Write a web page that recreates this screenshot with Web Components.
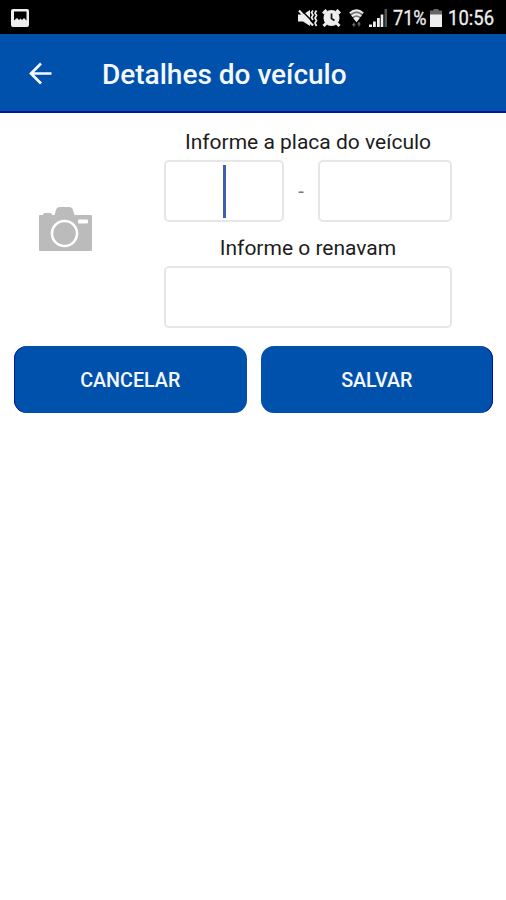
<!DOCTYPE html>
<html lang="pt-BR">
<head>
<meta charset="utf-8">
<meta name="viewport" content="width=device-width, initial-scale=1">
<title>Detalhes do veículo</title>
<style>
  :root {
    --color-primary: #0051ab;
    --color-primary-dark: #00159a;
    --color-caret: #3f60b0;
    --color-border: #e6e6e6;
    --color-icon: #bbb;
  }
  body {
    margin: 0;
    background: #fff;
    color: #1c1c1c;
    font-family: Roboto, sans-serif;
  }
</style>
</head>
<body>
<vehicle-screen></vehicle-screen>

<script>
class StatusBar extends HTMLElement {
  constructor() {
    super()
    this.attachShadow({ mode: 'open' })
    this.shadowRoot.innerHTML = `
      <style>
        :host {
          display: flex;
          align-items: center;
          box-sizing: border-box;
          height: 34px;
          padding: 2px 12px 0 11px;
          background: #000;
          color: #eee;
          font-size: 21px;
          line-height: 32px;
        }
        svg {
          display: block;
          fill: #eee;
          flex: none;
        }
        .picture { margin-right: auto; }
        .mute { margin-right: 4px; }
        .alarm { margin-right: 8px; }
        .wifi { margin-right: 5px; }
        .signal { margin-right: 6px; }
        .battery { margin: 0 6px 0 4px; }
        .percent, .time {
          white-space: nowrap;
          -webkit-text-stroke: .3px #eee;
        }
        .percent { width: 33px; }
        .time { width: 46px; }
        .percent span, .time span {
          display: inline-block;
          transform-origin: 0 50%;
        }
        .percent span { transform: scaleX(.86); }
        .time span { transform: scaleX(.88); }
      </style>
      <svg class="picture" width="18" height="18" viewBox="0 0 18 18">
        <path fill-rule="evenodd" d="M2 0h14a2 2 0 0 1 2 2v14a2 2 0 0 1-2 2H2a2 2 0 0 1-2-2V2a2 2 0 0 1 2-2zM3 2.500v9l3-2.600 2 2.100 1.500-1.500 1.500 1.500 2-2.100 2.500 2.600v-9z"/>
      </svg>
      <svg class="mute" width="20" height="18" viewBox="0 0 20 18">
        <path d="M0 5.500h5l7-4.500v16l-7-4.500H0z"/>
        <path d="M3 1l13 13" stroke="#000" stroke-width="1.600"/>
        <path d="M1 1.500l14 15" fill="none" stroke="#eee" stroke-width="2.200"/>
        <path d="M15 1.500l-1.500 2L15 6l-1.500 2.500L15 11M18.500 1.500L17 4l1.500 2.500L17 9l1.500 2.500L17 14l1.500 3" fill="none" stroke="#eee" stroke-width="1.700"/>
      </svg>
      <svg class="alarm" width="19" height="18" viewBox="0 0 19 18">
        <circle cx="9.500" cy="9" r="8"/>
        <path d="M1 4.500L4.500 1M18 4.500L14.500 1M4.500 14l-3 3M14.500 14l3 3" stroke="#eee" stroke-width="3"/>
        <path d="M9.500 4.500v5l3 2" fill="none" stroke="#111" stroke-width="1.700"/>
      </svg>
      <svg class="wifi" width="15" height="18" viewBox="0 0 15 18">
        <path d="M.5 4q7-6.500 14 0l-7 8.500z" fill="#777"/>
        <path d="M.8 4.200q6.700-6 13.400 0M2.800 7.300q4.700-4 9.400 0M4.800 10q2.700-2 5.400 0" fill="none" stroke="#eee" stroke-width="1.800"/>
        <path d="M5.300 10.500q2.200-1.500 4.400 0l-2.200 2.700z"/>
        <path d="M4.800 13.500v3M3.500 15l1.300 2 1.300-2M10 17.500V14M8.700 15.500l1.300-2 1.300 2" fill="none" stroke="#666" stroke-width="1.200"/>
      </svg>
      <svg class="signal" width="18" height="18" viewBox="0 0 18 18">
        <path d="M0 15.500h3V18H0zM4 12.500h2.800V18H4zM8 9h2.800v9H8zM11.700 5.500h2.600V18h-2.600z"/>
        <path d="M15.500 0H18v18h-2.500z" fill="#555"/>
      </svg>
      <div class="percent"><span>71%</span></div>
      <svg class="battery" width="12" height="18" viewBox="0 0 12 18">
        <path d="M3.500 0h5v1.500H12V6H0V1.500h3.500z" fill="#666"/>
        <path d="M0 5.500h12V18H0z"/>
      </svg>
      <div class="time"><span>10:56</span></div>
    `
  }
}

class AppHeader extends HTMLElement {
  constructor() {
    super()
    this.attachShadow({ mode: 'open' })
    this.shadowRoot.innerHTML = `
      <style>
        :host {
          display: flex;
          align-items: center;
          box-sizing: border-box;
          height: 79px;
          padding: 3px 0 0 28px;
          background: var(--color-primary);
          border-bottom: 2px solid var(--color-primary-dark);
          color: #f5f8ff;
        }
        svg {
          display: block;
          margin-right: 50px;
        }
        h1 {
          margin: 0;
          padding-top: 2px;
          font-size: 28px;
          font-weight: 500;
          line-height: 34px;
          white-space: nowrap;
        }
      </style>
      <svg width="24" height="24" viewBox="0 0 24 24">
        <path d="M23.500 11.500H3M13 1.500l-10 10 10 10" fill="none" stroke="#f5f8ff" stroke-width="2.700"/>
      </svg>
      <h1><slot></slot></h1>
    `
  }
}

class CameraIcon extends HTMLElement {
  constructor() {
    super()
    this.attachShadow({ mode: 'open' })
    this.shadowRoot.innerHTML = `
      <style>
        :host { display: block; }
        svg { display: block; fill: var(--color-icon); }
      </style>
      <svg width="54" height="45" viewBox="0 0 54 45">
        <path d="M1 9q0-1 1-1h3q0-2 2-2h5q2 0 2 2h2.500l1.500-5q.8-3 4-3h9q3.200 0 4 3l1.500 5H53q1 0 1 1v34q0 1-1 1H2q-1 0-1-1z"/>
        <circle cx="26.500" cy="26.500" r="12.500" fill="none" stroke="#fff" stroke-width="2.600"/>
        <rect x="40" y="12.500" width="10" height="4" rx="1" fill="#fff"/>
      </svg>
    `
  }
}

class TextBox extends HTMLElement {
  constructor() {
    super()
    this.attachShadow({ mode: 'open' })
    this.shadowRoot.innerHTML = `
      <style>
        :host {
          display: flex;
          align-items: center;
          justify-content: center;
          box-sizing: border-box;
          height: 62px;
          border: 2px solid var(--color-border);
          border-radius: 5px;
          background: #fff;
        }
        div {
          display: none;
          width: 3px;
          height: 53px;
          background: var(--color-caret);
        }
        :host([focused]) div { display: block; }
      </style>
      <div></div>
    `
  }
}

class FormField extends HTMLElement {
  constructor() {
    super()
    this.attachShadow({ mode: 'open' })
    this.shadowRoot.innerHTML = `
      <style>
        :host { display: block; }
        label {
          display: block;
          box-sizing: border-box;
          height: 36px;
          padding-top: 1px;
          font-size: 21px;
          line-height: 35px;
          text-align: center;
          white-space: nowrap;
        }
      </style>
      <label></label>
      <slot></slot>
    `
  }

  connectedCallback() {
    this.shadowRoot.querySelector('label').innerText = this.getAttribute('label')
  }
}

class ActionButton extends HTMLElement {
  constructor() {
    super()
    this.attachShadow({ mode: 'open' })
    this.shadowRoot.innerHTML = `
      <style>
        :host { display: block; }
        button {
          display: block;
          width: 100%;
          height: 67px;
          padding: 2px 0 0;
          border: 0;
          border-radius: 13px;
          background: var(--color-primary);
          color: #f5f8ff;
          font: 500 19.700px Roboto, sans-serif;
        }
        :host([edge="left"]) button { box-shadow: inset 1px 0 var(--color-primary-dark); }
        :host([edge="right"]) button { box-shadow: inset -1px 0 var(--color-primary-dark); }
      </style>
      <button><slot></slot></button>
    `
  }
}

class VehicleScreen extends HTMLElement {
  constructor() {
    super()
    this.attachShadow({ mode: 'open' })
    this.shadowRoot.innerHTML = `
      <style>
        :host {
          display: block;
          min-height: 100vh;
          background: #fff;
        }
        main {
          display: flex;
          align-items: center;
          padding: 11px 54px 0 38px;
        }
        camera-icon { margin: 7px 72px 0 0; }
        section {
          flex: 1;
          display: flex;
          flex-direction: column;
          gap: 8px;
        }
        .plate {
          display: grid;
          grid-template-columns: 120px 34px 134px;
          align-items: center;
          color: #777;
          font-size: 20px;
          text-align: center;
        }
        footer {
          display: grid;
          grid-template-columns: 1fr 1fr;
          gap: 14px;
          padding: 18px 13px 0 14px;
        }
      </style>
      <status-bar></status-bar>
      <app-header>Detalhes do veículo</app-header>
      <main>
        <camera-icon></camera-icon>
        <section>
          <form-field label="Informe a placa do veículo">
            <div class="plate">
              <text-box focused></text-box>
              <span>-</span>
              <text-box></text-box>
            </div>
          </form-field>
          <form-field label="Informe o renavam">
            <text-box></text-box>
          </form-field>
        </section>
      </main>
      <footer>
        <action-button edge="left">CANCELAR</action-button>
        <action-button edge="right">SALVAR</action-button>
      </footer>
    `
  }
}

customElements.define('status-bar', StatusBar)
customElements.define('app-header', AppHeader)
customElements.define('camera-icon', CameraIcon)
customElements.define('text-box', TextBox)
customElements.define('form-field', FormField)
customElements.define('action-button', ActionButton)
customElements.define('vehicle-screen', VehicleScreen)
</script>
</body>
</html>
